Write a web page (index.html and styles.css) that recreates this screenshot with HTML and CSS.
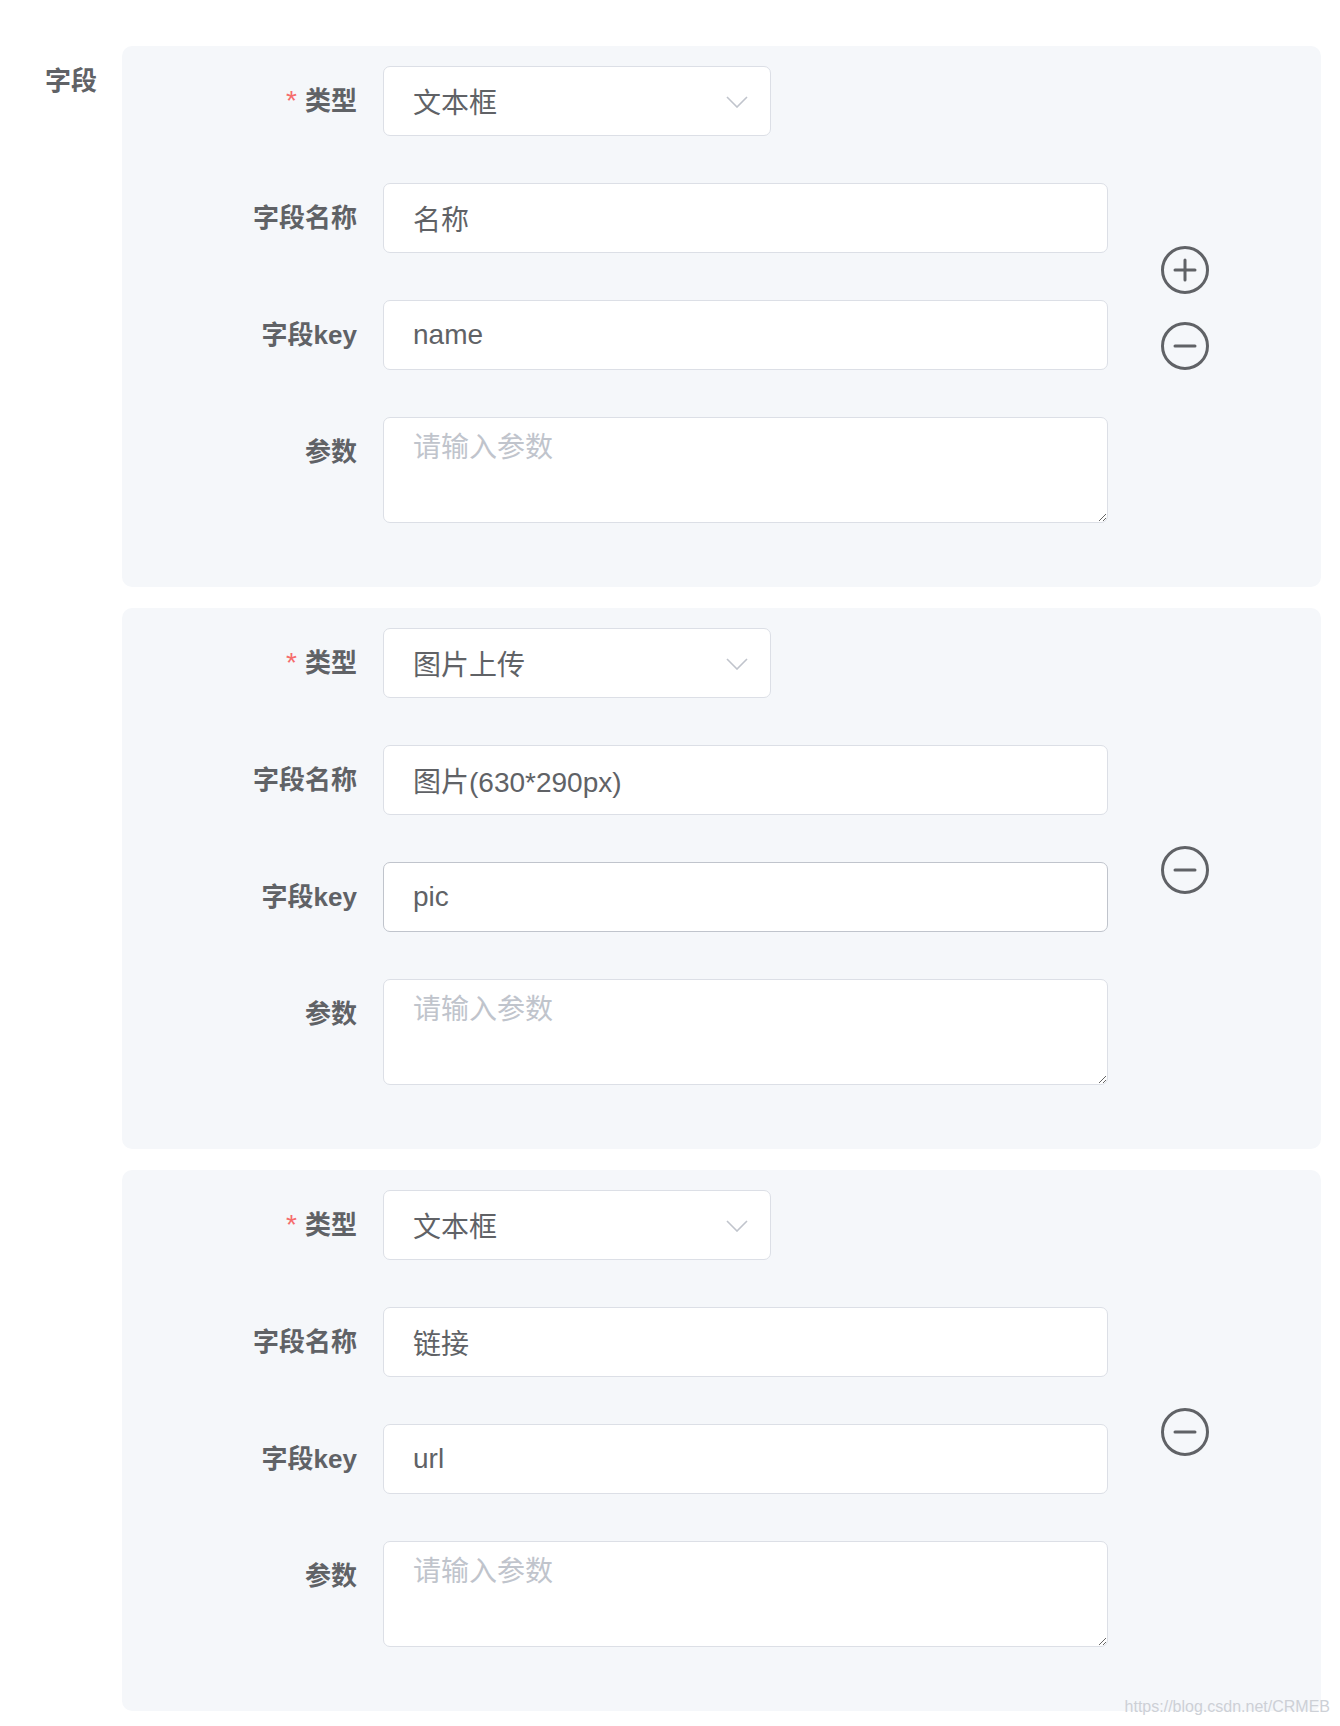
FILE: index.html
```html
<!DOCTYPE html>
<html lang="zh-CN">
<head>
<meta charset="utf-8">
<title>字段</title>
<link rel="stylesheet" href="styles.css">
</head>
<body>
<div class="form">
  <div class="form-item">
    <label class="outer-label">字段</label>
    <div class="panels">
      <div class="panel">
        <div class="fields">
          <div class="row"><label class="lbl"><span class="req">*</span>类型</label><div class="select"><span>文本框</span><svg class="chev" width="22" height="12" viewBox="0 0 22 12"><path d="M1 1 L11 11 L21 1" fill="none" stroke="#C0C4CC" stroke-width="1.6"/></svg></div></div>
          <div class="row"><label class="lbl">字段名称</label><input class="input" type="text" value="名称"></div>
          <div class="row"><label class="lbl">字段key</label><input class="input" type="text" value="name"></div>
          <div class="row"><label class="lbl">参数</label><textarea class="textarea" placeholder="请输入参数"></textarea></div>
        </div>
        <div class="actions">
          <svg class="icon" width="48" height="48" viewBox="0 0 48 48"><circle cx="24" cy="24" r="22.5" fill="none" stroke="#606266" stroke-width="3"/><path d="M14 24 H34 M24 14 V34" stroke="#606266" stroke-width="3" stroke-linecap="round"/></svg>
          <svg class="icon" width="48" height="48" viewBox="0 0 48 48"><circle cx="24" cy="24" r="22.5" fill="none" stroke="#606266" stroke-width="3"/><path d="M14 24 H34" stroke="#606266" stroke-width="3" stroke-linecap="round"/></svg>
        </div>
      </div>
      <div class="panel">
        <div class="fields">
          <div class="row"><label class="lbl"><span class="req">*</span>类型</label><div class="select"><span>图片上传</span><svg class="chev" width="22" height="12" viewBox="0 0 22 12"><path d="M1 1 L11 11 L21 1" fill="none" stroke="#C0C4CC" stroke-width="1.6"/></svg></div></div>
          <div class="row"><label class="lbl">字段名称</label><input class="input" type="text" value="图片(630*290px)"></div>
          <div class="row"><label class="lbl">字段key</label><input class="input hover" type="text" value="pic"></div>
          <div class="row"><label class="lbl">参数</label><textarea class="textarea" placeholder="请输入参数"></textarea></div>
        </div>
        <div class="actions">
          <svg class="icon" width="48" height="48" viewBox="0 0 48 48"><circle cx="24" cy="24" r="22.5" fill="none" stroke="#606266" stroke-width="3"/><path d="M14 24 H34" stroke="#606266" stroke-width="3" stroke-linecap="round"/></svg>
        </div>
      </div>
      <div class="panel">
        <div class="fields">
          <div class="row"><label class="lbl"><span class="req">*</span>类型</label><div class="select"><span>文本框</span><svg class="chev" width="22" height="12" viewBox="0 0 22 12"><path d="M1 1 L11 11 L21 1" fill="none" stroke="#C0C4CC" stroke-width="1.6"/></svg></div></div>
          <div class="row"><label class="lbl">字段名称</label><input class="input" type="text" value="链接"></div>
          <div class="row"><label class="lbl">字段key</label><input class="input" type="text" value="url"></div>
          <div class="row"><label class="lbl">参数</label><textarea class="textarea" placeholder="请输入参数"></textarea></div>
        </div>
        <div class="actions">
          <svg class="icon" width="48" height="48" viewBox="0 0 48 48"><circle cx="24" cy="24" r="22.5" fill="none" stroke="#606266" stroke-width="3"/><path d="M14 24 H34" stroke="#606266" stroke-width="3" stroke-linecap="round"/></svg>
        </div>
      </div>
    </div>
  </div>
</div>
<div class="watermark">https://blog.csdn.net/CRMEB</div>
</body>
</html>
```
FILE: styles.css
```css
* { box-sizing: border-box; }
html, body {
  margin: 0;
  background: #ffffff;
  font-family: "Liberation Sans", "Noto Sans CJK SC", sans-serif;
  color: #606266;
}
body { position: relative; min-height: 1726px; }
.form { padding-top: 46px; }
.form-item { display: flex; align-items: flex-start; }
.outer-label {
  width: 122px;
  padding-right: 25px;
  text-align: right;
  font-size: 26px;
  font-weight: 700;
  line-height: 70px;
  color: #606266;
}
.panels { display: flex; flex-direction: column; gap: 21px; }
.panel {
  width: 1199px;
  display: flex;
  align-items: flex-start;
  background: #f5f7fa;
  border-radius: 10px;
  padding: 20px 0 64px;
}
.fields { display: flex; flex-direction: column; gap: 47px; }
.row { display: flex; align-items: flex-start; }
.lbl {
  width: 261px;
  padding-right: 26px;
  text-align: right;
  font-size: 26px;
  font-weight: 700;
  line-height: 70px;
  color: #606266;
  white-space: nowrap;
}
.req {
  color: #F56C6C;
  margin-right: 8px;
  font-size: 28px;
  font-weight: 400;
}
.select, .input {
  height: 70px;
  border: 1px solid #DCDFE6;
  border-radius: 7px;
  background: #ffffff;
  font-family: inherit;
  font-size: 28px;
  color: #606266;
  padding: 0 29px;
}
.select {
  width: 388px;
  display: flex;
  align-items: center;
  justify-content: space-between;
  padding-right: 22px;
}
.chev { display: block; margin-top: 2px; }
.input { width: 725px; outline: none; }
.input.hover { border-color: #C0C4CC; }
.textarea {
  width: 725px;
  height: 106px;
  border: 1px solid #DCDFE6;
  border-radius: 7px;
  background: #ffffff;
  font-family: inherit;
  font-size: 28px;
  line-height: 1.5;
  color: #606266;
  padding: 9px 29px;
  resize: vertical;
  outline: none;
  display: block;
}
.textarea::placeholder { color: #C0C4CC; }
.actions {
  align-self: center;
  margin-left: 53px;
  margin-top: 26px;
  display: flex;
  flex-direction: column;
  gap: 28px;
}
.icon { display: block; }
.watermark {
  position: absolute;
  right: 10px;
  top: 1697px;
  font-family: "Liberation Sans", sans-serif;
  font-size: 16px;
  line-height: 20px;
  color: #cdd0d6;
}
```
